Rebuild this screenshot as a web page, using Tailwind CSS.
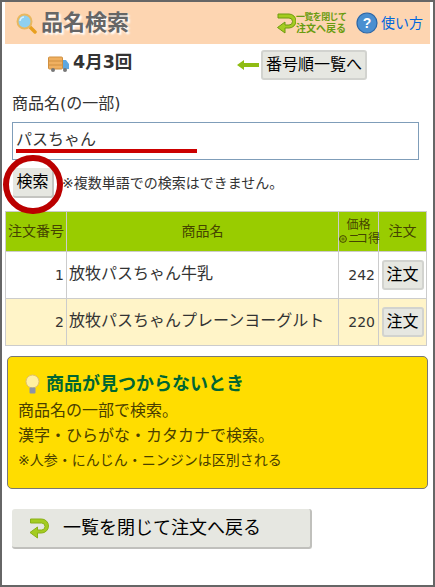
<!DOCTYPE html>
<html lang="ja">
  <head>
    <meta charset="UTF-8" />
    <meta name="viewport" content="width=device-width, initial-scale=1.0" />
    <title>品名検索</title>
    <script src="https://cdn.jsdelivr.net/npm/@tailwindcss/browser@4"></script>
  </head>
  <body class="bg-[#666666] h-[587px] overflow-hidden font-['DejaVu_Sans','Noto_Sans_CJK_JP',sans-serif] text-[#333333]">
    <div class="relative ml-[2px] mr-[2px] mt-[2px] h-[583px] bg-white pl-[3px] pr-[3px]">
      <!-- Header -->
      <header class="flex items-center h-[42px] bg-[#fdd5b1]">
        <svg class="ml-[11px] w-[21px] h-[21px]" viewBox="0 0 21 21">
          <path d="M13 13l6 6" stroke="#e8a020" stroke-width="3.500" stroke-linecap="round" />
          <circle cx="8.500" cy="8.500" r="7" fill="#8fd0f0" stroke="#e8b860" stroke-width="2" />
          <path d="M4 8a4.500 4.500 0 0 1 4-4" fill="none" stroke="#d8f0fb" stroke-width="1.500" />
        </svg>
        <h1 class="ml-[4px] text-[22px] leading-none font-bold text-[#666666] [text-shadow:2px_2px_2px_#ffffff]">品名検索</h1>
        <div class="ml-auto flex items-center">
          <svg class="w-[19px] h-[21px]" viewBox="0 0 19 21">
            <path d="M1 1h11a6.500 6.500 0 0 1 0 14h-4v5L0.500 14.500 8 9v3h4a3.500 3.500 0 0 0 0-7H1z" fill="#a4cc20" stroke="#6f9a10" stroke-width="1" />
          </svg>
          <p class="w-[50px] font-bold text-[#6a9c10] whitespace-nowrap">
            <span class="block text-[9px] leading-[11px] tracking-[-0.6px]">一覧を閉じて</span>
            <span class="block text-[10px] leading-[11px]">注文へ戻る</span>
          </p>
          <svg class="ml-[10px] w-[22px] h-[22px]" viewBox="0 0 22 22">
            <circle cx="11" cy="11" r="10" fill="#4a8fd0" stroke="#2a66a8" stroke-width="1.200" />
            <text x="11" y="16" text-anchor="middle" font-size="14" font-weight="700" fill="#ffffff" font-family="Liberation Sans">?</text>
          </svg>
          <a class="ml-[3px] mr-[7px] text-[14px] leading-none text-[#0066dd]">使い方</a>
        </div>
      </header>

      <!-- Round + list link -->
      <div class="flex items-center h-[30px] mt-[6px]">
        <svg class="ml-[43px] mb-[2px] w-[22px] h-[17px]" viewBox="0 0 22 17">
          <rect x="0.500" y="1" width="14" height="12" rx="1" fill="#f0b060" stroke="#d09040" />
          <path d="M1 5h13M1 9h13" stroke="#d09040" />
          <path d="M15 4h3l3 4v5h-6z" fill="#5fa8e0" />
          <circle cx="5" cy="14" r="2" fill="#777777" />
          <circle cx="17" cy="14" r="2" fill="#777777" />
        </svg>
        <span class="ml-[3px] mb-[4px] w-[58px] text-[17.5px] font-bold leading-none whitespace-nowrap">4月3回</span>
        <svg class="ml-[106px] w-[22px] h-[10px]" viewBox="0 0 22 10">
          <path d="M0 5l7-5v3h15v4H7v3z" fill="#8fbc12" />
        </svg>
        <button class="ml-[2px] w-[106px] h-[30px] rounded-[3px] bg-[#e6e7e1] border-2 border-[#d2d3cf] text-[16px] leading-none text-black whitespace-nowrap">番号順一覧へ</button>
      </div>

      <!-- Search form -->
      <label class="block ml-[7px] mt-[12px] text-[16px] leading-[24px]">商品名(の一部)</label>
      <div class="ml-[7px] mt-[6px] mr-[11px] h-[38px] border border-[#7f9db9] px-[3px] pt-[5px] text-[16px] leading-[24px]">パスちゃん</div>
      <div class="flex items-center mt-[8px] h-[30px]">
        <button class="ml-[8px] w-[41px] h-[30px] rounded-[3px] bg-[#e6e7e1] border-b-2 border-r-2 border-[#c4c4c0] text-[16px] leading-none text-black">検索</button>
        <p class="ml-[8px] text-[14px] leading-none whitespace-nowrap">※複数単語での検索はできません。</p>
      </div>

      <!-- Results -->
      <table class="mt-[13px] w-[421px] table-fixed border-collapse text-[14px] [&_td]:border [&_td]:border-[#cccccc] [&_th]:border [&_th]:border-[#cccccc] [&_th]:font-normal">
        <colgroup>
          <col class="w-[61px]" />
          <col class="w-[272px]" />
          <col class="w-[40px]" />
          <col class="w-[48px]" />
        </colgroup>
        <thead>
          <tr class="h-[40px] bg-[#99cc00] text-[#444400]">
            <th class="p-0 text-[14px] whitespace-nowrap">注文番号</th>
            <th class="p-0 text-[14px]">商品名</th>
            <th class="p-0 text-[12px] leading-[14px]">価格<br />
              <span class="inline-flex items-center justify-center whitespace-nowrap">
                <svg class="w-[8px] h-[8px]" viewBox="0 0 8 8">
                  <circle cx="4" cy="4" r="3.400" fill="none" stroke="#444400" />
                  <path d="M2.500 3.200h3M2.500 4.800h3" stroke="#444400" stroke-width="0.800" />
                </svg>
                <span class="ml-[1px] tracking-[-4px]">ニコ</span><span class="ml-[4px]">得</span>
              </span>
            </th>
            <th class="p-0 text-[14px]">注文</th>
          </tr>
        </thead>
        <tbody>
          <tr class="h-[47px]">
            <td class="pr-[2px] text-right">1</td>
            <td class="pl-[2px] pb-[3px] text-[16px] whitespace-nowrap">放牧パスちゃん牛乳</td>
            <td class="pr-[3px] text-right">242</td>
            <td class="text-center"><button class="w-[42px] h-[30px] rounded-[3px] bg-[#e6e7e1] border-2 border-[#d2d3cf] text-[16px] leading-none text-black">注文</button></td>
          </tr>
          <tr class="h-[47px] bg-[#fff4c8]">
            <td class="pr-[2px] text-right">2</td>
            <td class="pl-[2px] pb-[3px] text-[16px] whitespace-nowrap">放牧パスちゃんプレーンヨーグルト</td>
            <td class="pr-[3px] text-right">220</td>
            <td class="text-center"><button class="w-[42px] h-[30px] rounded-[3px] bg-[#e6e7e1] border-2 border-[#d2d3cf] text-[16px] leading-none text-black">注文</button></td>
          </tr>
        </tbody>
      </table>

      <!-- Help box -->
      <section class="mt-[10px] ml-[2px] w-[421px] h-[133px] rounded-[5px] border border-[#777777] bg-[#ffdd00] pl-[10px] pt-[16px] text-[#4a4000]">
        <div class="flex items-center h-[22px]">
          <svg class="ml-[7px] w-[15px] h-[21px]" viewBox="0 0 15 21">
            <circle cx="7.500" cy="7.500" r="6.500" fill="#fff0a0" stroke="#e0c070" />
            <rect x="4.500" y="13.500" width="6" height="6" rx="1" fill="#8a93a8" />
          </svg>
          <h2 class="ml-[6px] text-[18px] leading-none font-bold text-[#006633]">商品が見つからないとき</h2>
        </div>
        <p class="mt-[3px] text-[16px] leading-[25px]">商品名の一部で検索。</p>
        <p class="text-[16px] leading-[25px]">漢字・ひらがな・カタカナで検索。</p>
        <p class="mt-[1px] text-[14px] leading-[22px]">※人参・にんじん・ニンジンは区別される</p>
      </section>

      <!-- Back button -->
      <button class="flex items-center mt-[20px] ml-[7px] w-[300px] h-[40px] rounded-[3px] bg-[#e6e7e1] border-b-2 border-r-2 border-[#c0c0bc] text-[18px] leading-none text-black">
        <svg class="ml-[17px] w-[20px] h-[21px]" viewBox="0 0 19 21">
          <path d="M1 1h11a6.500 6.500 0 0 1 0 14h-4v5L0.500 14.500 8 9v3h4a3.500 3.500 0 0 0 0-7H1z" fill="#a4cc20" stroke="#8ab018" stroke-width="1" />
        </svg>
        <span class="ml-[14px] whitespace-nowrap">一覧を閉じて注文へ戻る</span>
      </button>

      <!-- Red annotations over the search form -->
      <div class="absolute left-[14px] top-[147px] w-[181px] h-[4px] bg-[#cc0000]"></div>
      <div class="absolute left-[1px] top-[153px] w-[60px] h-[59px] rounded-full border-[6px] border-[#bb0000]"></div>
    </div>
  </body>
</html>
